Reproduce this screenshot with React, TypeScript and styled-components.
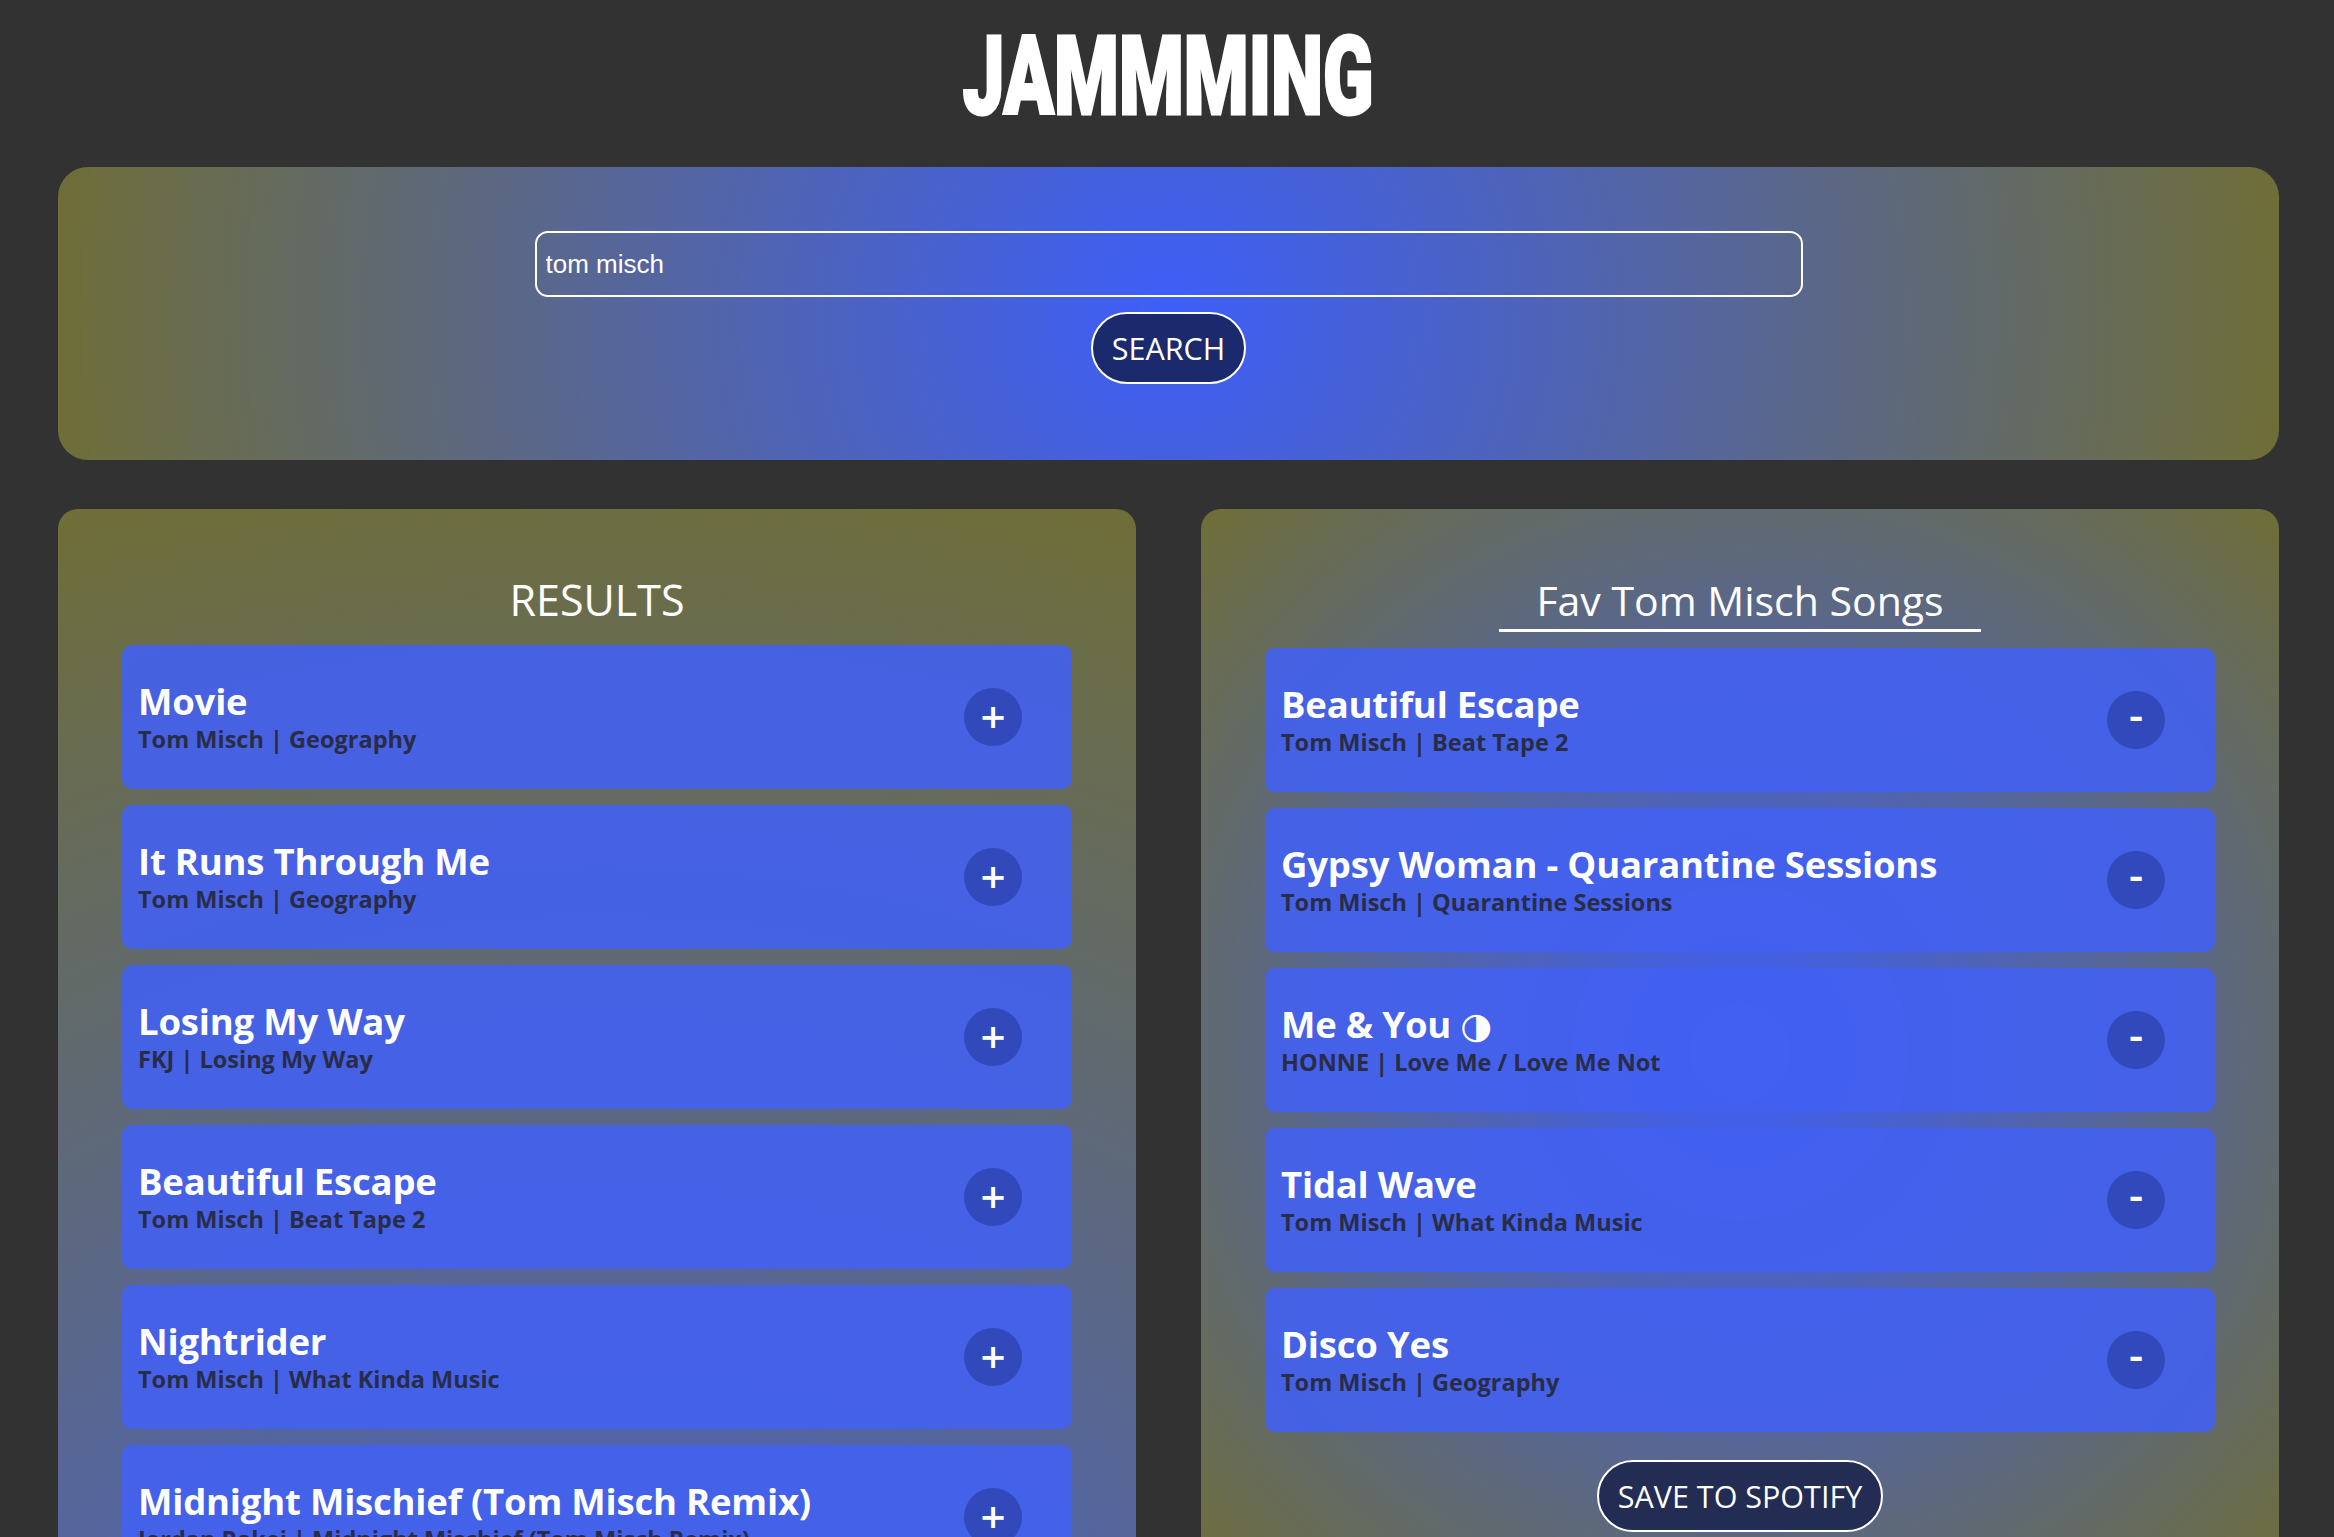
import React from "react";
import styled, { createGlobalStyle } from "styled-components";

const GlobalStyle = createGlobalStyle`
  html { scrollbar-width: none; }
  html::-webkit-scrollbar { display: none; }
  body {
    margin: 0;
    background: #323232;
    font-family: "Open Sans", "DejaVu Sans", sans-serif;
    color: #fff;
  }
  * { box-sizing: border-box; }
`;

const glow = (shape: string) => `radial-gradient(${shape}, #3d5ef9 0%, #6f6e37 100%)`;

const Page = styled.div`
  padding: 0 55px 0 58px;
`;

const Header = styled.header`
  display: flex;
  justify-content: center;
  padding: 22px 0 35px;
`;

const Logo = styled.h1`
  margin: 0;
  font-family: "Roboto", "DejaVu Sans Condensed", sans-serif;
  font-weight: 900;
  font-size: 110px;
  line-height: 110px;
  color: #fff;
  -webkit-text-stroke: 3px #fff;
  transform: scaleX(0.673);
`;

const SearchPanel = styled.section`
  display: flex;
  flex-direction: column;
  align-items: center;
  gap: 15px;
  height: 293px;
  padding-top: 64px;
  border-radius: 30px;
  background: ${glow("circle farthest-corner at 50% 50%")};
`;

const SearchInput = styled.input`
  width: 1268px;
  height: 66px;
  padding: 0 9px;
  border: 2px solid #fff;
  border-radius: 13px;
  background: transparent;
  color: #fff;
  font-family: "Liberation Sans", Arial, sans-serif;
  font-size: 26px;
  outline: none;
`;

const PillButton = styled.button<{ $tone: "search" | "save" }>`
  height: 72px;
  padding: 0 19px;
  border: 2px solid #fff;
  border-radius: 36px;
  background: ${(p) => (p.$tone === "search" ? "#1b2a6c" : "#232c52")};
  color: #fff;
  font-family: "Open Sans", "DejaVu Sans", sans-serif;
  font-size: 30.5px;
  font-weight: 400;
  cursor: pointer;
`;

const Columns = styled.main`
  display: grid;
  grid-template-columns: 1fr 1fr;
  gap: 65px;
  margin-top: 49px;
  align-items: start;
`;

const ListPanel = styled.section<{ $glow: string }>`
  display: flex;
  flex-direction: column;
  align-items: stretch;
  padding: 61px 64px 64px;
  border-radius: 20px;
  background: ${(p) => glow(p.$glow)};
`;

const PanelHeading = styled.h2`
  margin: 0 0 16px;
  text-align: center;
  font-size: 43px;
  font-weight: 400;
  line-height: normal;
  color: #fff;
`;

const PlaylistName = styled.input`
  align-self: center;
  width: 482px;
  height: 62px;
  margin: 0 0 16px;
  padding: 0;
  border: none;
  border-bottom: 3px solid #fff;
  background: transparent;
  color: #fff;
  text-align: center;
  font-family: "Open Sans", "DejaVu Sans", sans-serif;
  font-size: 41px;
  line-height: normal;
  outline: none;
`;

const TrackList = styled.ul`
  list-style: none;
  margin: 0;
  padding: 0;
  display: flex;
  flex-direction: column;
  gap: 16px;
`;

const TrackCard = styled.li`
  display: flex;
  align-items: center;
  justify-content: space-between;
  height: 144px;
  padding: 0 50px 0 16px;
  border-radius: 10px;
  background: rgba(66, 97, 241, 0.9);
`;

const TrackInfo = styled.div`
  display: flex;
  flex-direction: column;
  gap: 4px;
  min-width: 0;
`;

const TrackTitle = styled.h3`
  margin: 0;
  font-size: 36.5px;
  font-weight: 700;
  line-height: 40px;
  color: #fff;
  white-space: nowrap;
  letter-spacing: -0.2px;
`;

const TrackMeta = styled.p`
  margin: 0;
  font-size: 23.5px;
  font-weight: 700;
  line-height: 28px;
  color: #292c46;
  white-space: nowrap;
`;

const TrackAction = styled.button<{ $kind: "add" | "remove" }>`
  flex: none;
  width: 58px;
  height: 58px;
  padding: 0 0 ${(p) => (p.$kind === "remove" ? "12px" : "2px")};
  border: none;
  border-radius: 50%;
  background: #3249bb;
  color: #fff;
  font-family: "Open Sans", "DejaVu Sans", sans-serif;
  font-size: 44px;
  font-weight: 600;
  line-height: 58px;
  display: flex;
  align-items: center;
  justify-content: center;
  cursor: pointer;
`;

const SaveRow = styled.div`
  display: flex;
  justify-content: center;
  margin-top: 28px;
`;

type Track = { name: string; artist: string; album: string };

const results: Track[] = [
  { name: "Movie", artist: "Tom Misch", album: "Geography" },
  { name: "It Runs Through Me", artist: "Tom Misch", album: "Geography" },
  { name: "Losing My Way", artist: "FKJ", album: "Losing My Way" },
  { name: "Beautiful Escape", artist: "Tom Misch", album: "Beat Tape 2" },
  { name: "Nightrider", artist: "Tom Misch", album: "What Kinda Music" },
  { name: "Midnight Mischief (Tom Misch Remix)", artist: "Jordan Rakei", album: "Midnight Mischief (Tom Misch Remix)" },
];

const playlist: Track[] = [
  { name: "Beautiful Escape", artist: "Tom Misch", album: "Beat Tape 2" },
  { name: "Gypsy Woman - Quarantine Sessions", artist: "Tom Misch", album: "Quarantine Sessions" },
  { name: "Me & You \u25D1", artist: "HONNE", album: "Love Me / Love Me Not" },
  { name: "Tidal Wave", artist: "Tom Misch", album: "What Kinda Music" },
  { name: "Disco Yes", artist: "Tom Misch", album: "Geography" },
];

function TrackRow({ track, kind }: { track: Track; kind: "add" | "remove" }) {
  return (
    <TrackCard>
      <TrackInfo>
        <TrackTitle>{track.name}</TrackTitle>
        <TrackMeta>
          {track.artist} | {track.album}
        </TrackMeta>
      </TrackInfo>
      <TrackAction $kind={kind}>{kind === "add" ? "+" : "-"}</TrackAction>
    </TrackCard>
  );
}

export default function App() {
  return (
    <>
      <GlobalStyle />
      <Page>
        <Header>
          <Logo>JAMMMING</Logo>
        </Header>
        <SearchPanel>
          <SearchInput defaultValue="tom misch" />
          <PillButton $tone="search">SEARCH</PillButton>
        </SearchPanel>
        <Columns>
          <ListPanel $glow="circle 1776px at 50% 1692px">
            <PanelHeading>RESULTS</PanelHeading>
            <TrackList>
              {results.map((t, i) => (
                <TrackRow key={i} track={t} kind="add" />
              ))}
            </TrackList>
          </ListPanel>
          <ListPanel $glow="circle farthest-corner at 50% 50%">
            <PlaylistName defaultValue="Fav Tom Misch Songs" />
            <TrackList>
              {playlist.map((t, i) => (
                <TrackRow key={i} track={t} kind="remove" />
              ))}
            </TrackList>
            <SaveRow>
              <PillButton $tone="save">SAVE TO SPOTIFY</PillButton>
            </SaveRow>
          </ListPanel>
        </Columns>
      </Page>
    </>
  );
}
